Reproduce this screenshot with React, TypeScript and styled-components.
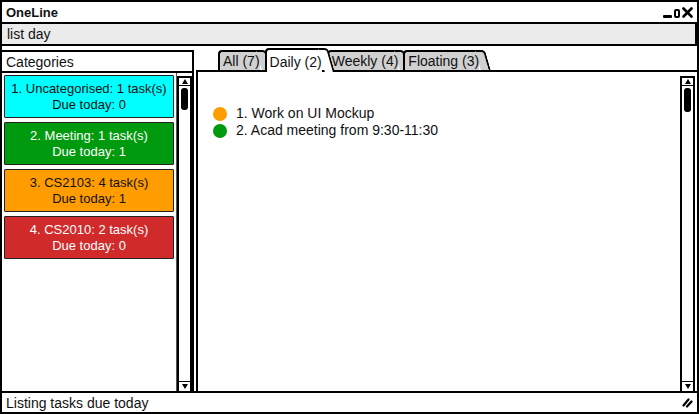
import React from 'react'
import styled, { createGlobalStyle } from 'styled-components'

type Category = {
    label: string
    due: number
    bg: string
    fg: string
}

type Task = {
    label: string
    color: string
}

const categories: Category[] = [
    { label: '1. Uncategorised: 1 task(s)', due: 0, bg: '#00ffff', fg: '#111' },
    { label: '2. Meeting: 1 task(s)', due: 1, bg: '#009a0e', fg: '#fff' },
    { label: '3. CS2103: 4 task(s)', due: 1, bg: '#ff9c00', fg: '#111' },
    { label: '4. CS2010: 2 task(s)', due: 0, bg: '#d12a2a', fg: '#fff' },
]

const tabs = [
    { label: 'All (7)', active: false },
    { label: 'Daily (2)', active: true },
    { label: 'Weekly (4)', active: false },
    { label: 'Floating (3)', active: false },
]

const tasks: Task[] = [
    { label: '1. Work on UI Mockup', color: '#ff9c00' },
    { label: '2. Acad meeting from 9:30-11:30', color: '#009a0e' },
]

const GlobalStyle = createGlobalStyle`
    body {
        margin: 0;
        background: #fff;
        font-family: 'Liberation Sans', Arial, sans-serif;
        font-size: 14px;
        color: #111;
    }
`

const Window = styled.div`
    width: 699px;
    height: 414px;
    box-sizing: border-box;
    border: 2px solid #000;
    display: flex;
    flex-direction: column;
    background: #fff;
`

const TitleBar = styled.div`
    height: 20px;
    display: flex;
    align-items: center;
    justify-content: space-between;
    padding: 0 4px;
    border-bottom: 2px solid #000;
    font-weight: bold;
    font-size: 13px;
`

const WindowControls = styled.div`
    display: flex;
    align-items: flex-end;
    gap: 2px;
    height: 12px;
`

const Minimise = styled.span`
    width: 9px;
    height: 3px;
    background: #000;
    border-radius: 1px;
`

const Maximise = styled.span`
    width: 6px;
    height: 9px;
    border: 2px solid #000;
    border-radius: 2px;
    box-sizing: border-box;
`

const CommandInput = styled.div`
    height: 20px;
    display: flex;
    align-items: center;
    padding: 0 5px;
    background: #ebebeb;
    border-bottom: 2px solid #000;
    border-right: 2px solid #000;
`

const Main = styled.div`
    flex: 1;
    display: flex;
    gap: 2px;
    padding-top: 3px;
    min-height: 0;
`

const Sidebar = styled.div`
    width: 192px;
    display: flex;
    flex-direction: column;
`

const SidebarHeader = styled.div`
    height: 19px;
    margin-top: 1px;
    display: flex;
    align-items: center;
    padding: 0 4px;
    border: 2px solid #000;
    border-left: none;
`

const CategoryBox = styled.div`
    flex: 1;
    display: flex;
    border-right: 2px solid #000;
    min-height: 0;
`

const CategoryList = styled.div`
    flex: 1;
    display: flex;
    flex-direction: column;
    gap: 4px;
    padding: 2px 2px 0 2px;
    border-right: 1px solid #555;
`

const CategoryCard = styled.div<{ $bg: string; $fg: string }>`
    height: 43px;
    box-sizing: border-box;
    display: flex;
    flex-direction: column;
    align-items: center;
    justify-content: center;
    font-size: 13px;
    line-height: 16px;
    background: ${(p) => p.$bg};
    color: ${(p) => p.$fg};
    border: 1.5px solid #222;
    border-radius: 1px;
`

const ScrollTrack = styled.div<{ $inset?: boolean }>`
    width: 11px;
    display: flex;
    flex-direction: column;
    justify-content: space-between;
    border-left: 2px solid #000;
    border-right: 2px solid #000;
    margin: ${(p) => (p.$inset ? '4px 0 0 0' : '3px 0 0 0')};
    position: relative;
`

const Arrow = styled.div<{ $down?: boolean }>`
    height: 10px;
    box-sizing: border-box;
    border: 1.5px solid #000;
    border-left: none;
    border-right: none;
    ${(p) => (p.$down ? 'border-bottom: none;' : 'border-top: 2px solid #000;')}
    display: flex;
    align-items: center;
    justify-content: center;

    &::after {
        content: '';
        width: 0;
        height: 0;
        border-left: 3.5px solid transparent;
        border-right: 3.5px solid transparent;
        ${(p) => (p.$down ? 'border-top: 5px solid #000;' : 'border-bottom: 5px solid #000;')}
    }
`

const Thumb = styled.div<{ $long?: boolean }>`
    position: absolute;
    top: 12px;
    left: 2px;
    width: 7px;
    height: ${(p) => (p.$long ? '24px' : '22px')};
    background: #000;
    border-radius: 3px;
`

const ContentSide = styled.div`
    flex: 1;
    display: flex;
    flex-direction: column;
`

const TabRow = styled.div`
    height: 24px;
    display: flex;
    align-items: flex-end;
    padding-left: 22px;
    margin-top: -1px;
    margin-bottom: -2px;
    position: relative;
    z-index: 1;
`

const Tab = styled.div<{ $active?: boolean }>`
    position: relative;
    height: ${(p) => (p.$active ? '24px' : '22px')};
    display: flex;
    align-items: center;
    padding: ${(p) => (p.$active ? '2px 0 0 3px' : '0 0 0 3px')};
    margin-right: 5px;
    background: ${(p) => (p.$active ? '#fff' : '#d0d0d0')};
    border: 2px solid #000;
    border-right: none;
    border-bottom: ${(p) => (p.$active ? 'none' : '2px solid #000')};
    border-radius: 4px 0 0 0;
    box-sizing: border-box;
    z-index: ${(p) => (p.$active ? 2 : 1)};
    white-space: nowrap;

    &::after {
        content: '';
        position: absolute;
        top: -2px;
        bottom: ${(p) => (p.$active ? '0' : '-2px')};
        right: -6px;
        width: 8px;
        background: inherit;
        border-top: 2px solid #000;
        border-right: 2px solid #000;
        border-bottom: ${(p) => (p.$active ? 'none' : '2px solid #000')};
        border-radius: 0 4px 0 0;
        transform: skewX(16deg);
        transform-origin: top left;
        z-index: -1;
    }
`

const ContentBox = styled.div`
    flex: 1;
    display: flex;
    border: 2px solid #000;
    border-right: none;
    border-bottom: none;
    padding-right: 2px;
`

const TaskList = styled.div`
    flex: 1;
    display: flex;
    flex-direction: column;
    gap: 2px;
    padding: 34px 0 0 15px;
`

const TaskRow = styled.div`
    display: flex;
    align-items: center;
    gap: 9px;
    line-height: 15px;
`

const Dot = styled.span<{ $color: string }>`
    width: 14px;
    height: 14px;
    border-radius: 50%;
    background: ${(p) => p.$color};
`

const StatusBar = styled.div`
    height: 19px;
    display: flex;
    align-items: center;
    justify-content: space-between;
    padding: 0 4px;
    border-top: 2px solid #000;
`

const Scrollbar = ({ inset }: { inset?: boolean }) => (
    <ScrollTrack $inset={inset}>
        <Arrow />
        <Thumb $long={inset} />
        <Arrow $down />
    </ScrollTrack>
)

const App = () => {
    return (
        <>
            <GlobalStyle />
            <Window>
                <TitleBar>
                    <span>OneLine</span>
                    <WindowControls>
                        <Minimise />
                        <Maximise />
                        <svg width="11" height="11" viewBox="0 0 11 11">
                            <path d="M1.5 1.5 L9.5 9.5 M9.5 1.5 L1.5 9.5" stroke="#000" strokeWidth="2.6" strokeLinecap="round" />
                        </svg>
                    </WindowControls>
                </TitleBar>
                <CommandInput>list day</CommandInput>
                <Main>
                    <Sidebar>
                        <SidebarHeader>Categories</SidebarHeader>
                        <CategoryBox>
                            <CategoryList>
                                {categories.map((c) => (
                                    <CategoryCard key={c.label} $bg={c.bg} $fg={c.fg}>
                                        <span>{c.label}</span>
                                        <span>Due today: {c.due}</span>
                                    </CategoryCard>
                                ))}
                            </CategoryList>
                            <Scrollbar />
                        </CategoryBox>
                    </Sidebar>
                    <ContentSide>
                        <TabRow>
                            {tabs.map((t) => (
                                <Tab key={t.label} $active={t.active}>
                                    {t.label}
                                </Tab>
                            ))}
                        </TabRow>
                        <ContentBox>
                            <TaskList>
                                {tasks.map((t) => (
                                    <TaskRow key={t.label}>
                                        <Dot $color={t.color} />
                                        <span>{t.label}</span>
                                    </TaskRow>
                                ))}
                            </TaskList>
                            <Scrollbar inset />
                        </ContentBox>
                    </ContentSide>
                </Main>
                <StatusBar>
                    <span>Listing tasks due today</span>
                    <svg width="11" height="11" viewBox="0 0 11 11">
                        <path d="M1.5 8.5 L6.5 2.5 M5 9.5 L9.5 4.5" stroke="#000" strokeWidth="2.2" strokeLinecap="round" />
                    </svg>
                </StatusBar>
            </Window>
        </>
    )
}

export default App
